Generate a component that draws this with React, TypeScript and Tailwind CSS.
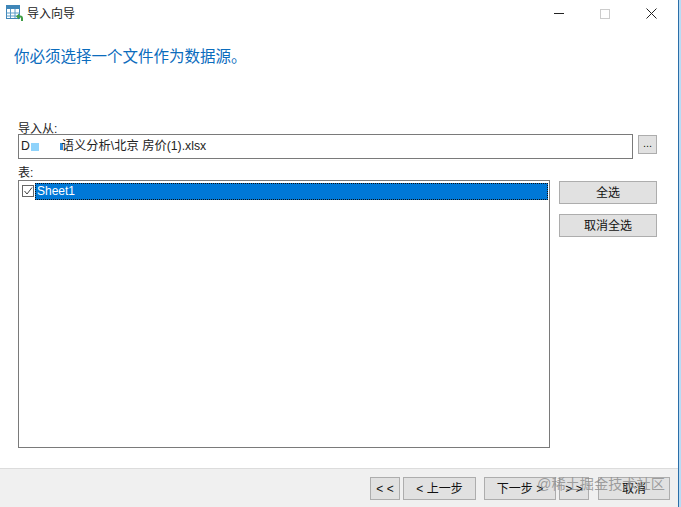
const cjk = "font-['Liberation_Sans','Noto_Sans_CJK_SC',sans-serif]";

function Btn({ w, children, className = "" }: { w: string; children: React.ReactNode; className?: string }) {
  return (
    <div className={`${w} h-[23px] flex items-center justify-center bg-[#e1e1e1] border border-[#adadad] text-[12px] text-[#111] ${className}`}>
      {children}
    </div>
  );
}

function AppIcon() {
  return (
    <svg width="18" height="17" viewBox="0 0 18 17" className="shrink-0">
      <rect x="0.5" y="0.5" width="13" height="13" fill="#fff" stroke="#3f86b8" />
      <rect x="0.5" y="0.5" width="13" height="3.5" fill="#3f86b8" />
      <path d="M0.5 8h13M0.5 11h13M4.5 4v9M9 4v9" stroke="#5b9cc8" strokeWidth="1" fill="none" />
      <path d="M10 11.5l3-3v2h1.5c1.5 0 2.5 1.2 2.5 3v2.5h-2v-2.5c0-.6-.3-1-1-1H13v2z" fill="#3f9e46" />
    </svg>
  );
}

export default function App() {
  return (
    <div className={`${cjk} w-[681px] h-[507px] flex bg-white overflow-hidden relative`}>
      <div className="w-[678px] h-full flex flex-col bg-white">
        <div className="h-[27px] flex items-center pl-[6px] shrink-0">
          <AppIcon />
          <span className="ml-[3px] text-[12px] text-[#222]">导入向导</span>
          <div className="ml-auto flex items-center">
            <div className="w-[10px] h-px bg-[#222] mr-[36px]"></div>
            <div className="w-[10px] h-[10px] border border-[#ccc] mr-[36px]"></div>
            <svg width="11" height="11" viewBox="0 0 11 11" className="mr-[21px]">
              <path d="M0.5 0.5l10 10M10.5 0.5l-10 10" stroke="#222" strokeWidth="1" fill="none" />
            </svg>
          </div>
        </div>
        <div className="pl-[14px] mt-[19px] h-[21px] leading-[21px] text-[15.5px] text-[#0b6cbd] shrink-0">你必须选择一个文件作为数据源。</div>
        <div className="flex-1 flex flex-col pl-[18px] pr-[21px] pt-[55px] min-h-0">
          <div className="text-[12px] leading-[14px] h-[12px] text-[#222]">导入从:</div>
          <div className="flex items-start">
            <div className="w-[616px] h-[25px] border border-[#7a7a7a] flex items-center pl-[2px] text-[12.25px] text-[#222] relative">
              <span>D</span>
              <span className="w-[8px] h-[8px] bg-[#8fd3fb] ml-[1px]"></span>
              <span className="w-[3px] h-[7px] bg-[#2f8fe0] ml-[21px]"></span>
              <span className="-ml-px">语义分析\北京 房价(1).xlsx</span>
            </div>
            <Btn w="w-[19px]" className="ml-[5px] mt-px !h-[19px] pb-[2px] !text-[11px]">...</Btn>
          </div>
          <div className="text-[12px] leading-[14px] h-[14px] mt-[7px] text-[#222]">表:</div>
          <div className="flex items-start flex-1 min-h-0">
            <div className="w-[532px] h-[268px] border border-[#7a7a7a] p-px">
              <div className="flex items-center h-[17px] pt-px">
                <div className="w-[12px] h-[12px] ml-[2px] border border-[#666] flex items-center justify-center shrink-0">
                  <svg width="10" height="10" viewBox="0 0 10 10">
                    <path d="M1.5 5l2.5 3 5-6.5" stroke="#444" strokeWidth="1" fill="none" />
                  </svg>
                </div>
                <div className="ml-px w-[514px] h-[17px] bg-[#0078d7] border border-dotted border-[#111] flex items-center text-[12px] text-white pl-px">Sheet1</div>
              </div>
            </div>
            <div className="ml-[9px] mt-px flex flex-col gap-[10px]">
              <Btn w="w-[98px]">全选</Btn>
              <Btn w="w-[98px]">取消全选</Btn>
            </div>
          </div>
        </div>
        <div className="h-[39px] shrink-0 bg-[#f0f0f0] border-t border-[#dcdcdc] flex items-start pt-[8px] pl-[370px] text-[12px]">
          <Btn w="w-[30px]">&lt; &lt;</Btn>
          <Btn w="w-[73px]" className="ml-[3px]">&lt; 上一步</Btn>
          <Btn w="w-[72px]" className="ml-[8px]">下一步 &gt;</Btn>
          <Btn w="w-[30px]" className="ml-[3px]">&gt; &gt;</Btn>
          <Btn w="w-[72px]" className="ml-[9px]">取消</Btn>
        </div>
      </div>
      <div className="w-[3px] h-full border-l border-[#2a6ea8] bg-[#b8dcf5]"></div>
      <div className="absolute left-[537px] top-[476px] text-[14.2px] leading-[16px] text-[#8a8a8a]/80 whitespace-nowrap">@稀土掘金技术社区</div>
    </div>
  );
}
